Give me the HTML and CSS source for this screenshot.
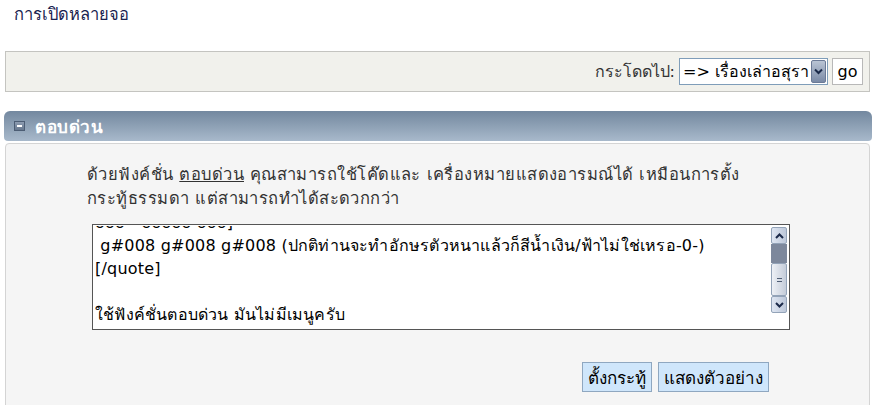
FILE: index.html
```html
<!DOCTYPE html>
<html>
<head>
    <meta charset="UTF-8">
    <title>ตอบด่วน</title>
    <link rel="stylesheet" href="styles.css">
</head>
<body>
    <div class="top-title">การเปิดหลายจอ</div>

    <div class="jump-bar">
        <span class="jump-label">กระโดดไป:</span>
        <div class="jump-select">
            <span class="jump-value">=&gt; เรื่องเล่าอสุรา</span>
            <span class="jump-arrow">
                <svg width="9" height="7" viewBox="0 0 9 7"><path d="M1 1.5 L4.5 5 L8 1.5" fill="none" stroke="#1b2a4a" stroke-width="2"/></svg>
            </span>
        </div>
        <button class="go-btn">go</button>
    </div>

    <div class="qr-head">
        <span class="qr-toggle"></span>
        <span class="qr-title">ตอบด่วน</span>
    </div>
    <div class="qr-panel">
        <p class="qr-desc">ด้วยฟังค์ชั่น <u>ตอบด่วน</u> คุณสามารถใช้โค๊ดและ เครื่องหมายแสดงอารมณ์ได้ เหมือนการตั้ง<br>กระทู้ธรรมดา แต่สามารถทำได้สะดวกกว่า</p>

        <div class="qr-box">
            <div class="qr-text">
                <div class="qr-cut"><span>ooo - ooooo ooo]</span></div>
                <div class="qr-line">&nbsp;g#008 g#008 g#008 (ปกติท่านจะทำอักษรตัวหนาแล้วก็สีน้ำเงิน/ฟ้าไม่ใช่เหรอ-0-)</div>
                <div class="qr-line">[/quote]</div>
                <div class="qr-line">&nbsp;</div>
                <div class="qr-line">ใช้ฟังค์ชั่นตอบด่วน มันไม่มีเมนูครับ</div>
            </div>
            <div class="sb">
                <div class="sb-btn">
                    <svg width="9" height="6" viewBox="0 0 9 6"><path d="M1 5 L4.5 1.5 L8 5" fill="none" stroke="#1b2a4a" stroke-width="2"/></svg>
                </div>
                <div class="sb-track"></div>
                <div class="sb-thumb"><span class="sb-grip"></span></div>
                <div class="sb-btn">
                    <svg width="9" height="6" viewBox="0 0 9 6"><path d="M1 1 L4.5 4.5 L8 1" fill="none" stroke="#1b2a4a" stroke-width="2"/></svg>
                </div>
            </div>
        </div>

        <div class="qr-actions">
            <button class="qr-btn">ตั้งกระทู้</button>
            <button class="qr-btn">แสดงตัวอย่าง</button>
        </div>
    </div>
</body>
</html>
```

FILE: styles.css
```css
html,body,div,p,span,button{ margin: 0; padding: 0; }
body{ font-family: Tahoma, "DejaVu Sans", "Noto Sans", sans-serif; font-size: 15px; color: #333; background: #fff; }

.top-title{ height: 51px; padding: 4px 0 0 14px; box-sizing: border-box; color: #1a2350; font-size: 16.5px; line-height: 22px; }

.jump-bar{ margin-left: 5px; width: 865px; height: 41px; box-sizing: border-box; border: 1px solid #c4c4c0; background: #f1f1ec; display: flex; align-items: center; justify-content: flex-end; padding-right: 6px; }
.jump-label{ color: #333; font-size: 16px; margin-right: 4px; }
.jump-select{ width: 149px; height: 27px; box-sizing: border-box; border: 1px solid #7f9db9; background: #fff; display: flex; align-items: center; overflow: hidden; }
.jump-value{ flex: 1; padding-left: 3px; font-size: 16px; color: #000; white-space: nowrap; overflow: hidden; }
.jump-arrow{ width: 15px; height: 23px; margin-right: 1px; background: linear-gradient(#b9c4d4, #7a8aa6); border: 1px solid #6b7a96; border-radius: 2px; box-sizing: border-box; display: flex; align-items: center; justify-content: center; }
.go-btn{ margin-left: 4px; width: 31px; height: 27px; border: 1px solid #b8b8b8; background: #fff; font-family: inherit; font-size: 16px; color: #000; }

.qr-head{ margin: 19px 0 0 4px; width: 868px; height: 30px; box-sizing: border-box; border-radius: 6px 6px 4px 4px; background: linear-gradient(#73889f, #a8b9cb); display: flex; align-items: center; padding-left: 10px; }
.qr-toggle{ width: 11px; height: 10px; box-sizing: border-box; border: 1px solid #4c5d74; background: linear-gradient(#8e9db2, #66778e); position: relative; }
.qr-toggle::after{ content: ""; position: absolute; left: 2px; right: 2px; top: 3px; height: 2px; background: #fff; }
.qr-title{ margin-left: 10px; color: #fff; font-weight: bold; font-size: 17px; letter-spacing: 0.5px; }

.qr-panel{ margin: 2px 0 0 5px; width: 865px; height: 270px; box-sizing: border-box; border: 1px solid #d4d4d4; border-radius: 4px 4px 0 0; background: #f5f5f5; padding: 19px 0 0 81px; }
.qr-desc{ font-size: 16.5px; letter-spacing: 0.45px; line-height: 24px; color: #333; }
.qr-desc u{ color: #333; }

.qr-box{ margin: 13px 0 0 5px; width: 698px; height: 106px; box-sizing: border-box; border: 1px solid #555; background: #fff; display: flex; padding: 1px 2px 0 0; }
.qr-text{ flex: 1; overflow: hidden; padding-left: 2px; }
.qr-cut{ height: 8px; overflow: hidden; display: flex; align-items: flex-end; }
.qr-cut span, .qr-line{ font-family: Tahoma, "DejaVu Sans", "Noto Sans", sans-serif; font-size: 16px; letter-spacing: 0.2px; line-height: 23px; color: #000; white-space: nowrap; }
.qr-cut span{ display: block; height: 23px; flex: none; }

.sb{ width: 16px; height: 86px; margin-top: 1px; display: flex; flex-direction: column; }
.sb-btn{ height: 17px; box-sizing: border-box; border: 1px solid #93a3b8; border-radius: 2px; background: linear-gradient(90deg, #dfe6f2, #bcc7d9); display: flex; align-items: center; justify-content: center; }
.sb-track{ height: 19px; background: #7d889c; }
.sb-thumb{ flex: 1; box-sizing: border-box; border: 1px solid #93a3b8; border-radius: 2px; background: linear-gradient(90deg, #eef1f6, #c4ccd9); display: flex; align-items: center; justify-content: center; }
.sb-grip{ width: 5px; height: 4px; border-top: 1px solid #4e5d74; border-bottom: 1px solid #4e5d74; box-sizing: border-box; }

.qr-actions{ display: flex; gap: 6px; margin: 32px 0 0 495px; }
.qr-btn{ height: 30px; padding: 0 5px; border: 1px solid #8fa7c0; background: #cfe6fb; font-family: inherit; font-size: 17px; color: #000; }
```
